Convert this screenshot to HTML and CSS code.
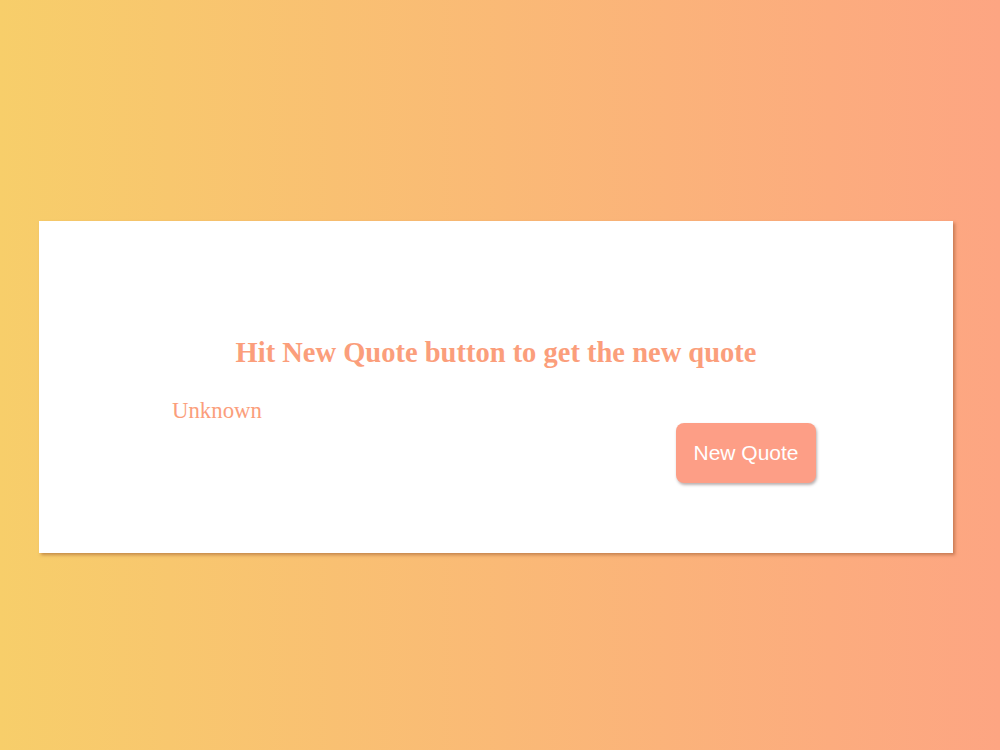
FILE: index.html
```html
<!DOCTYPE html>
<html>
<head>
<meta charset="utf-8">
<link rel="stylesheet" href="styles.css">
</head>
<body>
<div class="card">
  <h1 class="quote">Hit New Quote button to get the new quote</h1>
  <div class="author">Unknown</div>
  <div class="actions"><button class="btn">New Quote</button></div>
</div>
</body>
</html>
```
FILE: styles.css
```css
html, body { margin: 0; height: 100%; }
body {
  background: linear-gradient(to right, #f7ce6a, #fda582);
  padding: 221px 0 0 39px;
  box-sizing: border-box;
  font-family: "Liberation Serif", serif;
}
.card {
  width: 914px;
  height: 332px;
  box-sizing: border-box;
  background: #fff;
  box-shadow: 2px 2px 3px rgba(150, 80, 40, 0.5);
  padding: 115px 137px 0 133px;
  display: flex;
  flex-direction: column;
}
.quote {
  margin: 0;
  text-align: center;
  font-size: 28.5px;
  font-weight: bold;
  color: #fb9e7b;
  line-height: 34px;
  margin-left: 4px;
}
.author {
  margin-top: 28px;
  font-size: 22.8px;
  line-height: 26px;
  color: #fb9e7b;
}
.actions { display: flex; justify-content: flex-end; margin-top: -1px; }
.btn {
  width: 140px;
  height: 60px;
  border: none;
  border-radius: 8px;
  background: #fd9e86;
  color: #fff;
  font-family: "Liberation Sans", Arial, sans-serif;
  font-size: 21px;
  box-shadow: 1px 2px 3px rgba(100, 80, 80, 0.45);
}
```
